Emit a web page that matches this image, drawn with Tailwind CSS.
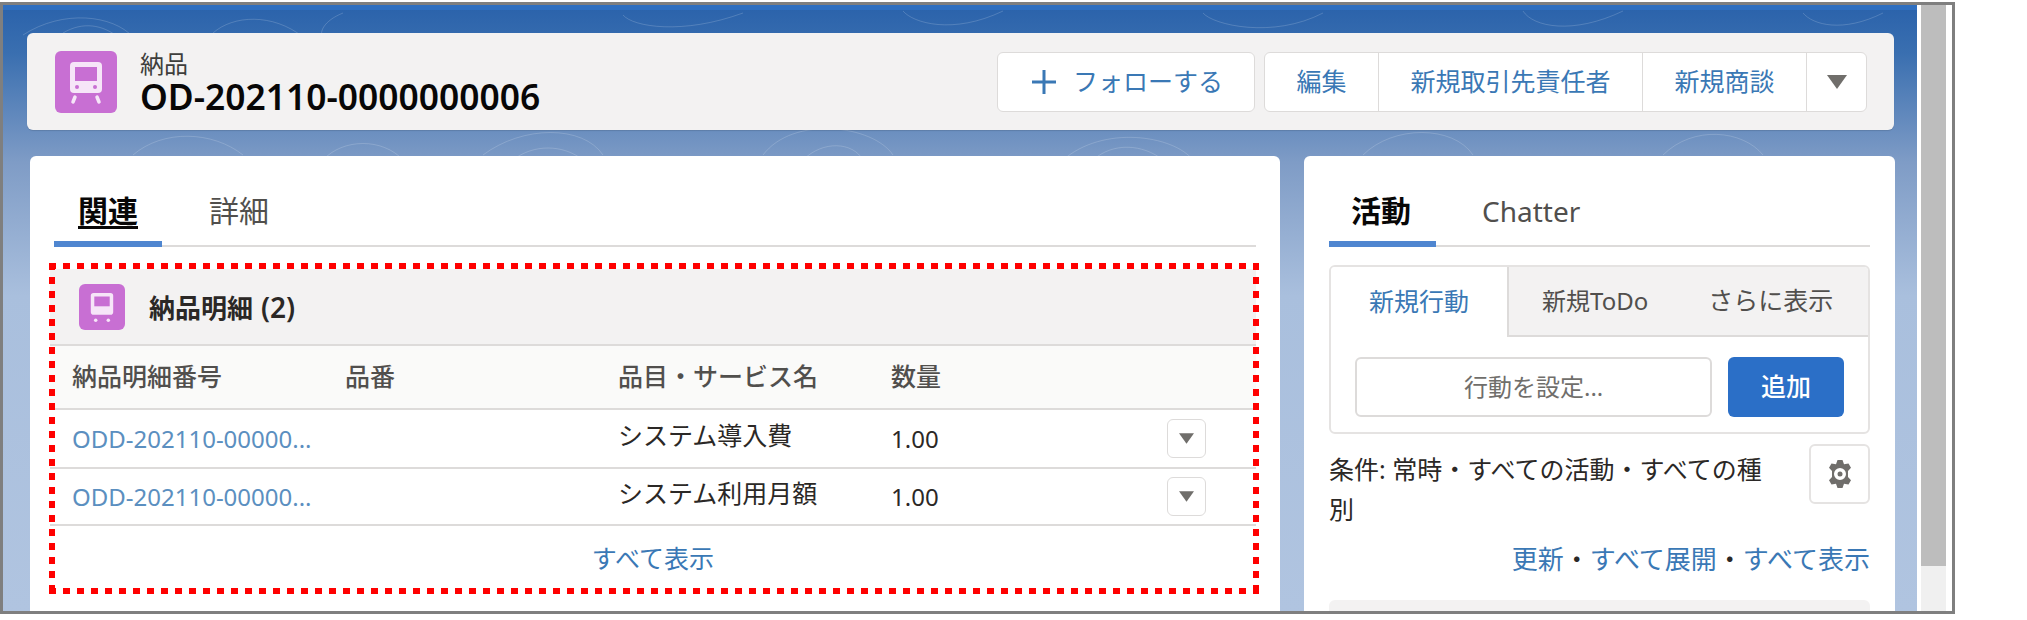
<!DOCTYPE html>
<html lang="ja">
<head>
<meta charset="utf-8">
<script src="https://cdn.jsdelivr.net/npm/@tailwindcss/browser@4"></script>
</head>
<body class="bg-white">
<div class="w-[2027px] h-[620px] bg-white overflow-hidden font-['Noto_Sans','Noto_Sans_CJK_JP',sans-serif] text-[25px] text-[#2b2826]">
  <div class="mt-[2px] w-[1955px] h-[612px] border-[3px] border-[#7f7f7f] flex">
    <div class="relative w-[1914px] h-full overflow-hidden bg-[linear-gradient(180deg,#2a62ab_0%,#3a6fb0_8%,#7f9cc6_26%,#a9bfdd_48%,#b0c4e0_100%)]">
      <div class="h-[5px] bg-[#2f6fc0]"></div>
      <svg class="absolute left-0 top-0 w-[1914px] h-[160px]" viewBox="0 0 1914 160" fill="none" stroke="#ffffff" stroke-opacity="0.17">
        <path d="M20 30C60 4 110 10 130 32M60 28c20-12 40-8 55 4M210 28c20-18 60-20 90 4M340 8c-20 8-24 20-20 24M480 150c40-30 100-30 120 0M510 155c20-16 50-16 70 0M620 10c10 12 60 20 120-2M760 150c30-40 110-30 130 0M800 155c20-20 50-18 60 0M900 6c10 12 50 24 100 0M1060 155c40-35 110-25 130 0M1090 155c20-18 50-16 70 0M1200 8c10 12 70 26 120 0M1360 150c30-30 90-30 110 0M1520 6c10 16 50 24 100 0M1660 150c30-30 80-25 100 0M1800 8c10 12 40 20 80 0M130 150c30-26 80-24 110 0M320 155c20-22 60-22 80 0"/>
      </svg>
      <div class="relative flex flex-col gap-[26px] pl-[24px] pt-[23px] w-[1891px]">
        <header class="h-[97px] w-[1867px] rounded-[6px] bg-[#f3f2f2] flex items-center pl-[28px] pr-[27px] shadow-[0_1px_1px_rgba(0,0,0,0.12)]">
          <div class="w-[62px] h-[62px] rounded-[6px] bg-[#c86fd3] flex items-center justify-center">
            <svg class="w-[40px] h-[46px]" viewBox="0 0 40 46" fill="none">
              <path d="M8 3h24a4 4 0 0 1 4 4v23a4 4 0 0 1-4 4H8a4 4 0 0 1-4-4V7a4 4 0 0 1 4-4Z" fill="#f6e5f8"/>
              <rect x="9" y="8" width="22" height="14" fill="#c86fd3"/>
              <circle cx="11" cy="28" r="2" fill="#c86fd3"/><circle cx="29" cy="28" r="2" fill="#c86fd3"/>
              <path d="M9 38l-2 5M31 38l2 5" stroke="#f6e5f8" stroke-width="3.5" stroke-linecap="round"/>
            </svg>
          </div>
          <div class="ml-[23px] flex flex-col">
            <span class="text-[24px] leading-[28px] text-[#3e3e3c]">納品</span>
            <span class="text-[35.4px] leading-[36px] font-semibold text-[#080707]">OD-202110-0000000006</span>
          </div>
          <div class="ml-auto flex gap-[9px] text-[25px] text-[#3a78b5]">
            <button class="w-[258px] h-[60px] bg-white border border-[#dddbda] rounded-[6px] flex items-center justify-start pl-[34px] gap-[17px]">
              <svg class="w-[24px] h-[24px]" viewBox="0 0 24 24" fill="none" stroke="#3a78b5" stroke-width="3"><path d="M12 0v24M0 12h24"/></svg>
              <span>フォローする</span>
            </button>
            <div class="h-[60px] bg-white border border-[#dddbda] rounded-[6px] flex items-stretch">
              <span class="w-[113px] flex items-center justify-center">編集</span>
              <span class="w-[264px] flex items-center justify-center border-l border-[#dddbda]">新規取引先責任者</span>
              <span class="w-[164px] flex items-center justify-center border-l border-[#dddbda]">新規商談</span>
              <span class="w-[60px] flex items-center justify-center border-l border-[#dddbda]">
                <svg class="w-[20px] h-[14px]" viewBox="0 0 20 14"><path d="M0 0h20L10 14Z" fill="#706e6b"/></svg>
              </span>
            </div>
          </div>
        </header>

        <div class="flex gap-[24px] items-start ml-[3px]">
          <main class="relative w-[1250px] h-[500px] bg-white rounded-t-[6px] px-[24px]">
            <div class="flex h-[91px] border-b-[2px] border-[#dddbda] text-[30px]">
              <div class="w-[108px] -mb-[2px] border-b-[6px] border-[#4f86d0] pl-[24px] pt-[34px] leading-[42px] font-semibold text-[#080707] underline underline-offset-[4px]">関連</div>
              <div class="ml-[47px] pt-[34px] leading-[42px] text-[#514f4d]">詳細</div>
            </div>
            <section class="mt-[22px] -ml-[4px] w-[1206px]">
              <div class="h-[77px] bg-[#f3f2f2] flex items-center pl-[29px] border-b-[2px] border-[#dddbda]">
                <div class="w-[46px] h-[46px] rounded-[6px] bg-[#c86fd3] flex items-center justify-center">
                  <svg class="w-[28px] h-[34px]" viewBox="0 0 40 46" fill="none">
                    <path d="M8 3h24a4 4 0 0 1 4 4v23a4 4 0 0 1-4 4H8a4 4 0 0 1-4-4V7a4 4 0 0 1 4-4Z" fill="#f6e5f8"/>
                    <rect x="9" y="8" width="22" height="14" fill="#c86fd3"/>
                    <circle cx="11" cy="42" r="2.5" fill="#f6e5f8"/><circle cx="29" cy="42" r="2.5" fill="#f6e5f8"/>
                  </svg>
                </div>
                <span class="ml-[24px] font-semibold text-[26px] text-[#2b2826]">納品明細<span class="ml-[8px] text-[28px]">(2)</span></span>
              </div>
              <div class="grid grid-cols-[273px_273px_273px_1fr] h-[64px] items-center bg-[#fafaf9] border-b-[2px] border-[#dddbda] text-[#514f4d] font-medium">
                <span class="pl-[22px]">納品明細番号</span><span class="pl-[22px]">品番</span><span class="pl-[22px]">品目・サービス名</span><span class="pl-[22px]">数量</span>
              </div>
              <div class="grid grid-cols-[273px_273px_273px_1fr] h-[59px] items-center border-b-[2px] border-[#dddbda]">
                <a class="pl-[22px] text-[#5b8fc0] text-[24px] whitespace-nowrap">ODD-202110-00000...</a><span></span><span class="pl-[22px] -mt-[5px]">システム導入費</span>
                <span class="pl-[22px] flex items-center justify-between pr-[50px] text-[24px]"><span>1.00</span>
                  <span class="w-[39px] h-[39px] border border-[#dddbda] rounded-[6px] flex items-center justify-center"><svg class="w-[15px] h-[11px]" viewBox="0 0 20 14"><path d="M0 0h20L10 14Z" fill="#706e6b"/></svg></span>
                </span>
              </div>
              <div class="grid grid-cols-[273px_273px_273px_1fr] h-[57px] items-center border-b-[2px] border-[#dddbda]">
                <a class="pl-[22px] text-[#5b8fc0] text-[24px] whitespace-nowrap">ODD-202110-00000...</a><span></span><span class="pl-[22px] -mt-[5px]">システム利用月額</span>
                <span class="pl-[22px] flex items-center justify-between pr-[50px] text-[24px]"><span>1.00</span>
                  <span class="w-[39px] h-[39px] border border-[#dddbda] rounded-[6px] flex items-center justify-center"><svg class="w-[15px] h-[11px]" viewBox="0 0 20 14"><path d="M0 0h20L10 14Z" fill="#706e6b"/></svg></span>
                </span>
              </div>
              <div class="h-[66px] flex items-center justify-center text-[#3a78b5] text-[25px]">すべて表示</div>
            </section>
            <div class="absolute left-[19px] top-[107px] w-[1210px] h-[331px] bg-[repeating-linear-gradient(90deg,#f00_0_7px,transparent_7px_14px),repeating-linear-gradient(90deg,#f00_0_7px,transparent_7px_14px),repeating-linear-gradient(180deg,#f00_0_7px,transparent_7px_14px),repeating-linear-gradient(180deg,#f00_0_7px,transparent_7px_14px)] bg-[length:100%_6px,100%_6px,6px_100%,6px_100%] bg-[position:0_0,0_100%,0_0,100%_0] bg-no-repeat"></div>
          </main>

          <aside class="w-[591px] h-[500px] bg-white rounded-t-[6px] px-[25px]">
            <div class="flex h-[91px] border-b-[2px] border-[#dddbda] text-[30px]">
              <div class="w-[107px] -mb-[2px] border-b-[6px] border-[#4f86d0] pl-[22px] pt-[34px] leading-[42px] font-semibold text-[#080707]">活動</div>
              <div class="ml-[46px] pt-[34px] leading-[42px] text-[#514f4d] text-[28px]">Chatter</div>
            </div>
            <div class="mt-[18px] h-[169px] border-[2px] border-[#e5e3e2] rounded-[6px] overflow-hidden">
              <div class="h-[70px] flex bg-[#f3f2f2] text-[25px]">
                <div class="w-[176px] bg-white flex items-center justify-center text-[#3a78b5]">新規行動</div>
                <div class="flex-1 flex items-center border-b-[2px] border-l-[2px] border-[#dddbda] text-[#514f4d]"><span class="ml-[33px] text-[24px]">新規ToDo</span><span class="ml-[60px]">さらに表示</span></div>
              </div>
              <div class="flex gap-[16px] px-[24px] pt-[20px]">
                <div class="w-[361px] h-[60px] border-[2px] border-[#dddbda] rounded-[6px] flex items-center justify-center text-[#706e6b] text-[24px]">行動を設定...</div>
                <div class="w-[117px] h-[60px] rounded-[6px] bg-[#2b6fc7] text-white flex items-center justify-center font-medium text-[25px]">追加</div>
              </div>
            </div>
            <div class="flex justify-between mt-[10px]">
              <p class="w-[450px] leading-[40px] pt-[5px] text-[25px] text-[#2b2826]">条件: 常時・すべての活動・すべての種別</p>
              <div class="w-[61px] h-[60px] border-[2px] border-[#e5e3e2] rounded-[6px] flex items-center justify-center">
                <svg class="w-[26px] h-[28px]" viewBox="0 0 26 28"><path fill="#706e6b" fill-rule="evenodd" d="M10.500 0h5l1.500 4.200 4.500-.8 2.500 4.300-3 3.300 0 6 3 3.300-2.500 4.300-4.500-.8L15.500 28h-5L9 23.800l-4.500.8L2 20.300l3-3.300v-6L2 7.700l2.500-4.300 4.500.8L10.500 0ZM13 8a6 6 0 1 0 0 12 6 6 0 0 0 0-12Z"/><circle cx="13" cy="14" r="2.500" fill="#706e6b"/></svg>
              </div>
            </div>
            <div class="mt-[10px] text-right text-[#3a78b5] text-[26px] leading-[40px] whitespace-nowrap">更新<span class="text-[#2b2826]">・</span>すべて展開<span class="text-[#2b2826]">・</span>すべて表示</div>
            <div class="mt-[21px] h-[60px] bg-[#f3f2f2] rounded-t-[6px]"></div>
          </aside>
        </div>
      </div>
    </div>
    <div class="w-[4px] bg-white"></div>
    <div class="w-[25px] h-full bg-[#f0f0f0]"><div class="h-[561px] bg-[#bdbdbd]"></div></div>
    <div class="flex-1 bg-white"></div>
  </div>
</div>
</body>
</html>
